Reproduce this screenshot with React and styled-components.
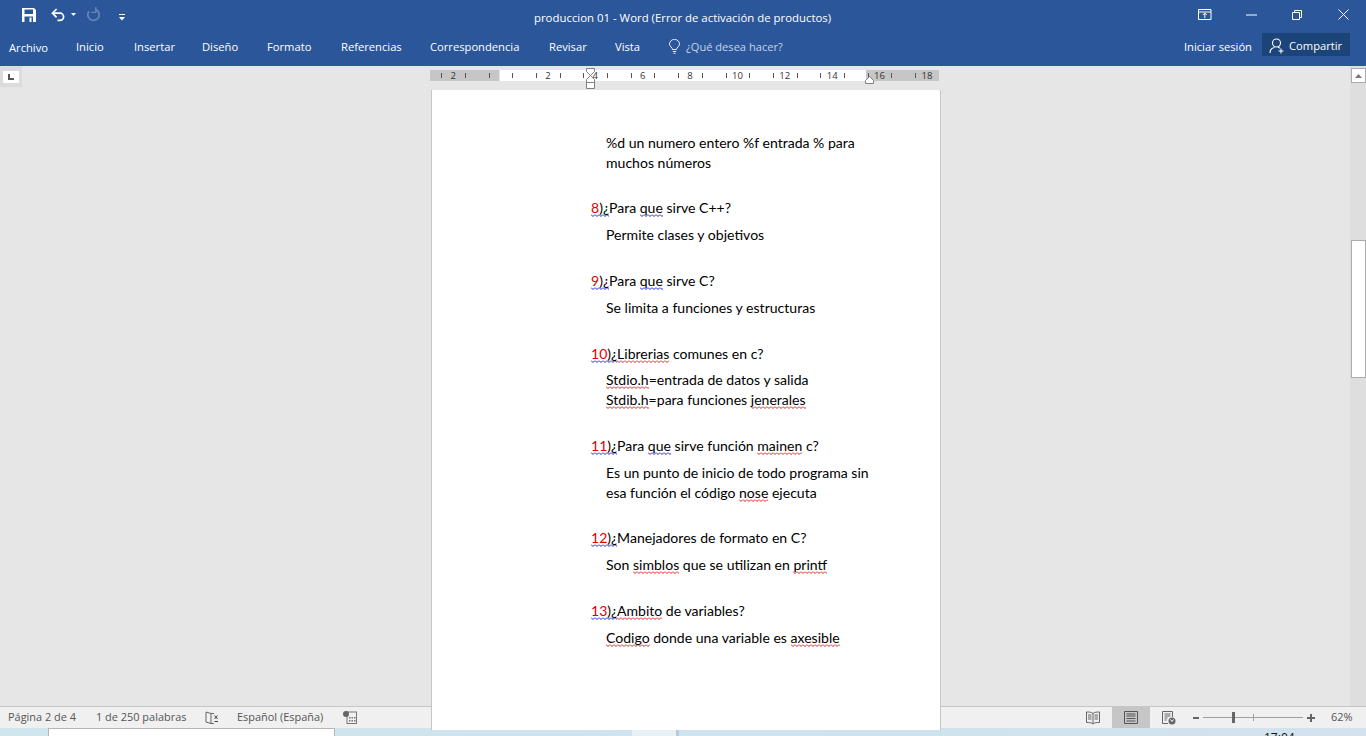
import React from "react";
import styled, { createGlobalStyle } from "styled-components";

const Global = createGlobalStyle`
  html, body { margin: 0; padding: 0; height: 100%; overflow: hidden; background: #e6e6e6; }
  #root { height: 100%; }
`;
const UI = `"Open Sans", "Noto Sans", sans-serif`;

const Shell = styled.div`
  width: 1366px; height: 736px; display: flex; flex-direction: column; overflow: hidden;
  font-family: ${UI};
`;
const Ribbon = styled.header`
  height: 66px; flex: none; background: #2b579a; color: #fff; display: flex; flex-direction: column;
`;
const TitleRow = styled.div`
  height: 31px; display: grid; grid-template-columns: 1fr 298px 1fr; align-items: center;
`;
const Quick = styled.div`
  display: flex; align-items: center; padding-left: 22px; height: 100%;
`;
const QuickBtn = styled.span`
  display: flex; align-items: center; width: ${p => p.$w}px; padding-top: ${p => p.$pt || 0}px;
`;
const Title = styled.div`
  font-size: 11.4px; text-align: center; white-space: nowrap; padding: 6px 2px 0 0;
`;
const WinCtrls = styled.div`
  display: flex; justify-content: flex-end; align-items: center; height: 100%;
`;
const WinBtn = styled.span`
  display: flex; justify-content: center; width: ${p => p.$w}px;
`;
const TabRow = styled.div`
  height: 35px; display: flex; align-items: flex-start; padding: 4px 16px 0 9px;
`;
const Tab = styled.span`
  font-size: 11.2px; line-height: 27px; width: ${p => p.$w}px; flex: none; white-space: nowrap;
  padding-top: ${p => p.$file ? 1 : 0}px;
`;
const Tell = styled.span`
  display: flex; align-items: center; height: 27px; font-size: 11.1px; color: #c7d3e6; gap: 6px;
`;
const Spacer = styled.span` flex: 1; `;
const SignIn = styled.span` font-size: 11.2px; line-height: 27px; margin-right: 10px; white-space: nowrap; `;
const Share = styled.span`
  width: 88px; height: 23px; background: #1b4478; display: flex; align-items: center; gap: 4px;
  padding: 2px 0 0 7px; box-sizing: border-box; font-size: 11.2px;
`;

const Work = styled.main`
  flex: 1; min-height: 0; display: grid; grid-template-columns: 1fr 16px; background: #e6e6e6;
`;
const DocColumn = styled.div`
  display: flex; flex-direction: column; min-width: 0; position: relative;
`;
const RulerBar = styled.div`
  height: 24px; flex: none; display: flex; align-items: flex-start;
`;
const TabStop = styled.div`
  width: 22px; height: 21px; background: #dcdcdc; flex: none; display: flex; align-items: center; justify-content: center;
`;
const TabStopInner = styled.div`
  width: 16px; height: 12px; background: #fff; display: flex; align-items: center; justify-content: center;
`;
const Ruler = styled.div`
  margin: 4px 0 0 408px; width: 510px; height: 11px; position: relative; flex: none; box-sizing: border-box;
  padding-left: 11.3px; display: flex;
  background: linear-gradient(90deg, #c6c6c6 0 69px, #e6e6e6 69px 70px, #fff 70px 436px, #c6c6c6 436px 509px, #e6e6e6 509px);
`;
const RulerCell = styled.span`
  width: 23.7px; flex: none; height: 11px; font-size: 9.5px; line-height: 11px; color: #333; text-align: center;
  background: linear-gradient(#555, #555) left center / 1px 5px no-repeat;
`;
const Marker = styled.svg`
  position: absolute; left: ${p => p.$x}px; top: ${p => p.$y}px;
`;
const Scroller = styled.div`
  flex: 1; min-height: 0; display: flex; justify-content: flex-start; overflow: hidden; padding-left: 431px;
`;
const Page = styled.article`
  width: 510px; height: 640px; box-sizing: border-box; background: #fff;
  border-left: 1px solid #c6c6c6; border-right: 1px solid #c6c6c6; flex: none;
  padding: 43px 0 0 159px; font-family: Lato, "Liberation Sans", sans-serif; font-size: 14.05px; line-height: 20px; color: #000;
`;
const Q = styled.p`
  margin: ${p => p.$mt ?? 26}px 0 0 0; white-space: nowrap;
`;
const A = styled.p`
  margin: ${p => p.$mt ?? 7}px 0 0 15px; white-space: nowrap;
`;
const wave = c => `url("data:image/svg+xml,%3Csvg xmlns='http://www.w3.org/2000/svg' width='4' height='3'%3E%3Cpath d='M0 .5l2 2 2-2' fill='none' stroke='${c}'/%3E%3C/svg%3E")`;
const Squiggle = styled.span`
  padding-bottom: 1px;
  background: ${p => wave(p.$c === "blue" ? "%231f1fe0" : "%23e01f1f")} left bottom / 4px 3px repeat-x;
`;
const Num = styled.span` color: #e00000; `;

const Scrollbar = styled.aside`
  background: #dedede; display: flex; flex-direction: column; align-items: center; padding: 2px 0 2px; box-sizing: border-box;
`;
const ScrollBtn = styled.div`
  width: 15px; height: 15px; box-sizing: border-box; background: #fff; border: 1px solid #ababab; flex: none;
  display: flex; align-items: center; justify-content: center;
`;
const Track = styled.div`
  flex: 1; width: 100%; display: flex; flex-direction: column; align-items: center; padding-top: 157px; box-sizing: border-box;
`;
const Thumb = styled.div`
  width: 15px; height: 138px; box-sizing: border-box; background: #fff; border: 1px solid #ababab;
`;

const Status = styled.footer`
  height: 22px; flex: none; box-sizing: border-box; border-top: 1px solid #c6c6c6; background: #f0f0f0;
  display: flex; align-items: stretch; font-size: 10.95px; color: #555; padding-left: 8px;
`;
const StatusText = styled.span`
  line-height: 19px; white-space: nowrap; width: ${p => p.$w}px; flex: none;
`;
const StatusIcon = styled.span`
  display: flex; align-items: center; width: ${p => p.$w}px; flex: none;
`;
const ViewBtn = styled.span`
  width: ${p => p.$w}px; flex: none; display: flex; align-items: center;
  justify-content: ${p => p.$on ? "center" : "flex-start"};
  background: ${p => p.$on ? "#c6c6c6" : "transparent"};
  padding-left: ${p => p.$pl || 0}px; box-sizing: border-box;
`;
const Zoom = styled.div`
  display: flex; align-items: center; flex: none; margin-left: 17px;
`;
const Slider = styled.div`
  width: 100px; height: 1px; background: #a0a0a0; margin: 0 4px; position: relative; flex: none;
`;
const SliderThumb = styled.span`
  position: absolute; left: 29px; top: -5px; width: 3px; height: 11px; background: #666;
`;
const SliderMid = styled.span`
  position: absolute; left: 50px; top: -3px; width: 1px; height: 7px; background: #a0a0a0;
`;
const Percent = styled.span` line-height: 19px; margin-left: 16px; white-space: nowrap; `;

const Desktop = styled.div`
  height: 8px; flex: none; display: flex; overflow: hidden;
  background: linear-gradient(90deg, #d0e6ee, #cfe4ee 40%, #cfe3ee 70%, #d3e2ee);
`;
const DeskGap = styled.span` width: ${p => p.$w}px; flex: none; `;
const DeskWindow = styled.span`
  width: 287px; flex: none; background: #fff; border-top: 1px solid #b5b5b5; border-left: 1px solid #b5b5b5; border-right: 1px solid #b5b5b5; box-sizing: border-box;
`;
const DeskLight = styled.span` width: 44px; flex: none; background: #e8f2f6; `;
const DeskLine = styled.span` width: 3px; flex: none; background: #b9cbd8; `;
const Clock = styled.span`
  font-size: 12px; line-height: 12px; color: #111; margin-left: 585px; padding-top: 4px; height: 12px; white-space: nowrap;
`;

const Save = () => (
  <svg width="14" height="14" viewBox="0 0 14 14">
    <path fill="#fff" fillRule="evenodd" d="M0 0h12l2 2v12H0zM2.500 1.500V6h8.500V1.500zM2.500 8.500V14h8.500V8.500zM7.500 9.500h2V14h-2z" />
  </svg>
);
const Undo = () => (
  <svg width="16" height="14" viewBox="0 0 16 14" fill="none" stroke="#fff" strokeWidth="1.7">
    <path d="M1.600 5.200h7.400a3.600 3.600 0 0 1 0 7.200H6.500" />
    <path d="M5.600 1 1.500 5.200l4.100 4.100" />
  </svg>
);
const Caret = ({ c = "#fff" }) => (
  <svg width="5" height="3" viewBox="0 0 5 3"><path d="M0 0h5L2.500 3z" fill={c} /></svg>
);
const Redo = () => (
  <svg width="15" height="15" viewBox="0 0 15 15" fill="none" stroke="#6285b7" strokeWidth="1.8">
    <path d="M9.500 2.400A5.700 5.700 0 1 1 3 4.200" />
    <path d="M9.800 0v5.400H5.200" strokeWidth="1.400" />
  </svg>
);
const Customize = () => (
  <svg width="6" height="7" viewBox="0 0 6 7" fill="#fff"><path d="M0 0h6v1H0zM0 3h6L3 6.500z" /></svg>
);
const Display = () => (
  <svg width="14" height="11" viewBox="0 0 14 11" fill="none" stroke="#fff">
    <path d="M.5.500h12.500v10H.5zM.5 3h12.500M6.800 9V4.400M4.800 6l2-2 2 2" />
  </svg>
);
const Min = () => <svg width="11" height="2" viewBox="0 0 11 2"><path d="M0 1h11" stroke="#fff" /></svg>;
const Restore = () => (
  <svg width="10" height="10" viewBox="0 0 10 10" fill="none" stroke="#fff">
    <path d="M.5 2.500h7v7h-7zM2.500 2.500v-2h7v7h-2" />
  </svg>
);
const Close = () => <svg width="11" height="11" viewBox="0 0 11 11"><path d="M.5.500l10 10M10.500.500l-10 10" stroke="#fff" /></svg>;
const Bulb = () => (
  <svg width="11" height="15" viewBox="0 0 11 15" fill="none" stroke="#e6ecf5">
    <path d="M3.500 10.500c0-2-3-3-3-5.600a5 4.500 0 0 1 10 0c0 2.600-3 3.600-3 5.600zM3.800 12.500h3.400M4.500 14.300h2" />
  </svg>
);
const UserPlus = () => (
  <svg width="16" height="16" viewBox="0 0 16 16" fill="none" stroke="#fff" strokeWidth="1.100">
    <circle cx="7.500" cy="5" r="4" />
    <path d="M1 15c0-3 2-5 4.500-5.500M9 9.300c.8.200 1.500.500 2 1M12 10.500v5M9.500 13h5" />
  </svg>
);
const GlyphL = () => <svg width="6" height="6" viewBox="0 0 6 6"><path d="M0 0h2v4h4v2H0z" fill="#555" /></svg>;
const Up = () => <svg width="7" height="4" viewBox="0 0 7 4"><path d="M3.500 0 7 4H0z" fill="#777" /></svg>;
const Down = () => <svg width="7" height="4" viewBox="0 0 7 4"><path d="M0 0h7L3.500 4z" fill="#777" /></svg>;
const Book = () => (
  <svg width="14" height="14" viewBox="0 0 14 14" fill="none" stroke="#666">
    <path d="M7 2.500C5.500 1 3 1 .5 1v10.500c2.500 0 5 0 6.500 1.500 1.500-1.500 4-1.500 6.500-1.500V1C11 1 8.500 1 7 2.500zM7 2.500V13M2 4h3.500M2 6h3.500M2 8h3.500M8.500 4H12M8.500 6H12M8.500 8H12" />
  </svg>
);
const PrintLayout = () => (
  <svg width="14" height="13" viewBox="0 0 14 13" fill="none" stroke="#555">
    <path d="M.5.500h13v12H.5zM2.500 3h9M2.500 5h9M2.500 7.500h9M2.500 10h9" />
  </svg>
);
const WebLayout = () => (
  <svg width="14" height="14" viewBox="0 0 14 14" fill="none" stroke="#666">
    <path d="M6 12.500H.5V.500h10V6M2.500 3h6M2.500 5h6M2.500 7h3M2.500 9h2" />
    <circle cx="10" cy="10" r="3.500" fill="#666" stroke="none" />
    <path d="M8 8.500c1 .5 2 1 2 2.500M11.500 8.500l-1 1.500" stroke="#fff" />
  </svg>
);
const Proof = () => (
  <svg width="14" height="14" viewBox="0 0 14 14" fill="none" stroke="#666">
    <path d="M6 2.500 1 1v10l5 1.500zM6 2.500h3M6 12.500h3" />
    <path d="M9.500 4.500l3 3.500M12.500 4.500l-3 3.500M9.500 10.500h3.500" stroke="#444" />
  </svg>
);
const Macro = () => (
  <svg width="14" height="13" viewBox="0 0 14 13">
    <rect x="4" y="1" width="9.500" height="11.500" fill="none" stroke="#777" />
    <path d="M6 6h1.500v1.500H6zM8.500 6H10v1.500H8.500zM11 6h1.500v1.500H11zM6 9h1.500v1.500H6zM8.500 9H10v1.500H8.500zM11 9h1.500v1.500H11z" fill="#777" />
    <circle cx="3" cy="3" r="3" fill="#666" />
  </svg>
);

const cells = ["2","","","","2","","4","","6","","8","","10","","12","","14","","16","","18"];

export default function App() {
  return (
    <Shell>
      <Global />
      <Ribbon>
        <TitleRow>
          <Quick>
            <QuickBtn $w={29} $pt={1}><Save /></QuickBtn>
            <QuickBtn $w={20}><Undo /></QuickBtn>
            <QuickBtn $w={15}><Caret /></QuickBtn>
            <QuickBtn $w={33}><Redo /></QuickBtn>
            <QuickBtn $w={6} $pt={5}><Customize /></QuickBtn>
          </Quick>
          <Title>produccion 01 - Word (Error de activación de productos)</Title>
          <WinCtrls>
            <WinBtn $w={46}><Display /></WinBtn>
            <WinBtn $w={46}><Min /></WinBtn>
            <WinBtn $w={46}><Restore /></WinBtn>
            <WinBtn $w={46}><Close /></WinBtn>
          </WinCtrls>
        </TitleRow>
        <TabRow>
          <Tab $w={67} $file>Archivo</Tab>
          <Tab $w={58}>Inicio</Tab>
          <Tab $w={68}>Insertar</Tab>
          <Tab $w={65}>Diseño</Tab>
          <Tab $w={74}>Formato</Tab>
          <Tab $w={89}>Referencias</Tab>
          <Tab $w={119}>Correspondencia</Tab>
          <Tab $w={66}>Revisar</Tab>
          <Tab $w={54}>Vista</Tab>
          <Tell><Bulb />¿Qué desea hacer?</Tell>
          <Spacer />
          <SignIn>Iniciar sesión</SignIn>
          <Share><UserPlus />Compartir</Share>
        </TabRow>
      </Ribbon>
      <Work>
        <DocColumn>
          <RulerBar>
            <TabStop><TabStopInner><GlyphL /></TabStopInner></TabStop>
            <Ruler>
              {cells.map((c, i) => <RulerCell key={i}>{c}</RulerCell>)}
              <Marker $x={156} $y={-2} width="9" height="22" viewBox="0 0 9 22" fill="#fff" stroke="#808080">
                <path d="M.5.500h8v3l-4 4-4-4zM4.500 7.500l4 4v3h-8v-3zM.5 14.500h8v6h-8z" />
              </Marker>
              <Marker $x={435} $y={6} width="9" height="8" viewBox="0 0 9 8" fill="#fff" stroke="#808080">
                <path d="M4.500.500l4 4v3h-8v-3z" />
              </Marker>
            </Ruler>
          </RulerBar>
          <Scroller>
            <Page>
              <A $mt={0}>%d un numero entero %f entrada % para<br />muchos números</A>
              <Q $mt={25}><Squiggle $c="blue"><Num>8</Num>)¿</Squiggle>Para <Squiggle $c="blue">que</Squiggle> sirve C++?</Q>
              <A>Permite clases y objetivos</A>
              <Q><Squiggle $c="blue"><Num>9</Num>)¿</Squiggle>Para <Squiggle $c="blue">que</Squiggle> sirve C?</Q>
              <A>Se limita a funciones y estructuras</A>
              <Q><Squiggle $c="blue"><Num>10</Num>)¿</Squiggle><Squiggle>Librerias</Squiggle> comunes en c?</Q>
              <A $mt={6}><Squiggle>Stdio.h</Squiggle>=entrada de datos y salida<br /><Squiggle>Stdib.h</Squiggle>=para funciones <Squiggle>jenerales</Squiggle></A>
              <Q><Squiggle $c="blue"><Num>11</Num>)¿</Squiggle>Para <Squiggle $c="blue">que</Squiggle> sirve función <Squiggle>mainen</Squiggle> c?</Q>
              <A>Es un punto de inicio de todo programa sin<br />esa función el código <Squiggle>nose</Squiggle> ejecuta</A>
              <Q $mt={25}><Squiggle $c="blue"><Num>12</Num>)¿</Squiggle>Manejadores de formato en C?</Q>
              <A>Son <Squiggle>simblos</Squiggle> que se utilizan en <Squiggle>printf</Squiggle></A>
              <Q><Squiggle $c="blue"><Num>13</Num>)¿</Squiggle><Squiggle>Ambito</Squiggle> de variables?</Q>
              <A><Squiggle>Codigo</Squiggle> donde una variable es <Squiggle>axesible</Squiggle></A>
            </Page>
          </Scroller>
        </DocColumn>
        <Scrollbar>
          <ScrollBtn><Up /></ScrollBtn>
          <Track><Thumb /></Track>
          <ScrollBtn><Down /></ScrollBtn>
        </Scrollbar>
      </Work>
      <Status>
        <StatusText $w={88}>Página 2 de 4</StatusText>
        <StatusText $w={109}>1 de 250 palabras</StatusText>
        <StatusIcon $w={32}><Proof /></StatusIcon>
        <StatusText $w={106}>Español (España)</StatusText>
        <StatusIcon $w={743}><Macro /></StatusIcon>
        <ViewBtn $w={26}><Book /></ViewBtn>
        <ViewBtn $w={38} $on><PrintLayout /></ViewBtn>
        <ViewBtn $w={26} $pl={12}><WebLayout /></ViewBtn>
        <Zoom>
          <svg width="6" height="2" viewBox="0 0 6 2"><path d="M0 1h6" stroke="#666" strokeWidth="2" /></svg>
          <Slider><SliderThumb /><SliderMid /></Slider>
          <svg width="8" height="8" viewBox="0 0 8 8"><path d="M0 4h8M4 0v8" stroke="#666" strokeWidth="2" /></svg>
        </Zoom>
        <Percent>62%</Percent>
      </Status>
      <Desktop>
        <DeskGap $w={48} />
        <DeskWindow />
        <DeskGap $w={297} />
        <DeskLight />
        <DeskLine />
        <Clock>17:04</Clock>
      </Desktop>
    </Shell>
  );
}
